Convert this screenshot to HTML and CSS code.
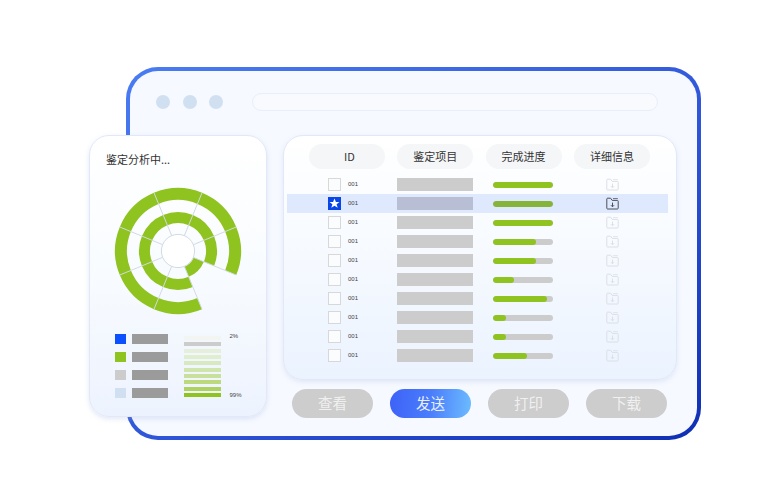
FILE: index.html
```html
<!DOCTYPE html>
<html lang="zh">
<head>
<meta charset="utf-8">
<title>鉴定分析</title>
<link rel="stylesheet" href="styles.css">
</head>
<body>
<svg class="defs" width="0" height="0" aria-hidden="true">
  <symbol id="folder" viewBox="0 0 13 13">
    <path d="M.8 11.2V2C.8 1.5 1.1 1.2 1.6 1.2H4.6L6.2 3.4H11.4C11.9 3.4 12.2 3.7 12.2 4.2V11.2C12.2 11.7 11.9 12 11.4 12H1.6C1.1 12 .8 11.7 .8 11.2Z" fill="none" stroke="currentColor" stroke-width="1"/>
    <path d="M7 1.6H11.8" fill="none" stroke="currentColor" stroke-width=".8"/>
    <path d="M6.5 5.6V9.6M4.9 8.2L6.5 9.8L8.1 8.2" fill="none" stroke="currentColor" stroke-width="1"/>
  </symbol>
</svg>
<div class="window">
  <div class="topbar">
    <span class="dot"></span><span class="dot"></span><span class="dot"></span>
    <div class="address"></div>
  </div>
  <div class="main">
    <div class="table-card">
      <div class="grid head">
        <div class="pill pill-id">ID</div>
        <div class="pill">鉴定项目</div>
        <div class="pill">完成进度</div>
        <div class="pill">详细信息</div>
      </div>
      <div class="grid row">
        <div class="id"><span class="check"></span><span class="num">001</span></div>
        <div class="block"></div>
        <div class="track"><div class="fill" style="width:100%"></div></div>
        <svg class="file"><use href="#folder"/></svg>
      </div>
      <div class="grid row active">
        <div class="id"><span class="check on"><svg viewBox="0 0 13 13"><path d="M6.5 1.6L7.9 5H11.5L8.6 7.2L9.7 10.8L6.5 8.7L3.3 10.8L4.4 7.2L1.5 5H5.1Z" fill="#fff"/></svg></span><span class="num">001</span></div>
        <div class="block"></div>
        <div class="track"><div class="fill" style="width:100%"></div></div>
        <svg class="file"><use href="#folder"/></svg>
      </div>
      <div class="grid row">
        <div class="id"><span class="check"></span><span class="num">001</span></div>
        <div class="block"></div>
        <div class="track"><div class="fill" style="width:100%"></div></div>
        <svg class="file"><use href="#folder"/></svg>
      </div>
      <div class="grid row">
        <div class="id"><span class="check"></span><span class="num">001</span></div>
        <div class="block"></div>
        <div class="track"><div class="fill" style="width:72%"></div></div>
        <svg class="file"><use href="#folder"/></svg>
      </div>
      <div class="grid row">
        <div class="id"><span class="check"></span><span class="num">001</span></div>
        <div class="block"></div>
        <div class="track"><div class="fill" style="width:72%"></div></div>
        <svg class="file"><use href="#folder"/></svg>
      </div>
      <div class="grid row">
        <div class="id"><span class="check"></span><span class="num">001</span></div>
        <div class="block"></div>
        <div class="track"><div class="fill" style="width:35%"></div></div>
        <svg class="file"><use href="#folder"/></svg>
      </div>
      <div class="grid row">
        <div class="id"><span class="check"></span><span class="num">001</span></div>
        <div class="block"></div>
        <div class="track"><div class="fill" style="width:90%"></div></div>
        <svg class="file"><use href="#folder"/></svg>
      </div>
      <div class="grid row">
        <div class="id"><span class="check"></span><span class="num">001</span></div>
        <div class="block"></div>
        <div class="track"><div class="fill" style="width:22%"></div></div>
        <svg class="file"><use href="#folder"/></svg>
      </div>
      <div class="grid row">
        <div class="id"><span class="check"></span><span class="num">001</span></div>
        <div class="block"></div>
        <div class="track"><div class="fill" style="width:22%"></div></div>
        <svg class="file"><use href="#folder"/></svg>
      </div>
      <div class="grid row">
        <div class="id"><span class="check"></span><span class="num">001</span></div>
        <div class="block"></div>
        <div class="track"><div class="fill" style="width:57%"></div></div>
        <svg class="file"><use href="#folder"/></svg>
      </div>
    </div>
    <div class="actions">
      <div class="btn">查看</div>
      <div class="btn primary">发送</div>
      <div class="btn">打印</div>
      <div class="btn">下载</div>
    </div>
  </div>
  <div class="side-card">
    <div class="side-title">鉴定分析中...</div>
    <svg class="donut" viewBox="0 0 130 130">
      <g fill="none" stroke="#8fc31f">
        <circle cx="65" cy="65" r="57" stroke-width="12" pathLength="360" stroke-dasharray="315 45" transform="rotate(67.5 65 65)"/>
        <circle cx="65" cy="65" r="33.5" stroke-width="11" pathLength="360" stroke-dasharray="315 45" transform="rotate(67.5 65 65)"/>
        <circle cx="65" cy="65" r="22.5" stroke-width="11" pathLength="360" stroke-dasharray="45 315" transform="rotate(22.5 65 65)"/>
      </g>
      <g stroke="#d2dae3" stroke-width="1">
        <path d="M65 65L123.2 41"/>
        <path d="M65 65L123.2 89"/>
        <path d="M65 65L89 123.2"/>
        <path d="M65 65L41 123.2"/>
        <path d="M65 65L6.8 89"/>
        <path d="M65 65L6.8 41"/>
        <path d="M65 65L41 6.8"/>
        <path d="M65 65L89 6.8"/>
      </g>
      <circle cx="65" cy="65" r="16.6" fill="#fff" stroke="#d2dae3" stroke-width="1"/>
    </svg>
    <div class="legend-area">
      <div class="legend">
        <div class="legend-row"><span class="swatch blue"></span><span class="legend-bar"></span></div>
        <div class="legend-row"><span class="swatch green"></span><span class="legend-bar"></span></div>
        <div class="legend-row"><span class="swatch grey"></span><span class="legend-bar"></span></div>
        <div class="legend-row"><span class="swatch pale"></span><span class="legend-bar"></span></div>
      </div>
      <div class="scale">
        <span class="tick t0"></span><span class="tick t1"></span><span class="tick t2"></span><span class="tick t3"></span><span class="tick t4"></span>
        <span class="tick t5"></span><span class="tick t6"></span><span class="tick t7"></span><span class="tick t8"></span><span class="tick t9"></span>
      </div>
      <div class="scale-labels"><span>2%</span><span>99%</span></div>
    </div>
  </div>
</div>
</body>
</html>
```
FILE: styles.css
```css
* { box-sizing: border-box; }
html, body { margin: 0; padding: 0; background: #fff; }
body {
  width: 767px;
  height: 500px;
  overflow: hidden;
  font-family: "Noto Sans CJK SC", "Noto Sans", sans-serif;
  color: #333;
}
.defs { display: block; height: 0; }
.window {
  position: relative;
  width: 575px;
  height: 373px;
  margin: 67px 0 0 126px;
  padding: 4px;
  border-radius: 32px;
  background: linear-gradient(150deg, #4a7cf2 0%, #2f55d8 55%, #0f2fb4 100%);
}
.window::before {
  content: "";
  position: absolute;
  inset: 4px;
  border-radius: 28px;
  background: #f6f9ff;
}
.topbar, .main { position: relative; }
.topbar {
  display: flex;
  align-items: center;
  gap: 12.5px;
  height: 64px;
  padding: 0 0 3px 26px;
}
.dot {
  width: 14px;
  height: 14px;
  border-radius: 50%;
  background: #d0e0f0;
}
.address {
  width: 406px;
  height: 18px;
  margin-left: 16px;
  border: 1px solid #e9eef8;
  border-radius: 9px;
  background: #f8fafe;
}
.main {
  display: flex;
  flex-direction: column;
  width: 394px;
  margin-left: 153px;
}
.table-card {
  height: 245px;
  padding: 8px 0 0 3px;
  border: 1px solid #e2e8f8;
  border-radius: 20px;
  background: linear-gradient(180deg, #fff 0%, #f8fbff 40%, #ebf3ff 100%);
  box-shadow: 0 2px 5px rgba(160, 180, 225, .25);
}
.grid {
  display: grid;
  grid-template-columns: 76px 76px 76px 76px;
  column-gap: 12.3px;
  align-items: center;
  width: 381px;
  padding-left: 22px;
}
.head { height: 25px; margin-bottom: 6px; }
.pill {
  height: 25px;
  border-radius: 13px;
  background: #f5f6f8;
  font-size: 11px;
  line-height: 24px;
  text-align: center;
  color: #333;
}
.pill-id { padding-left: 5px; }
.row { height: 19px; }
.row.active { background: #dfe9fd; }
.id {
  display: flex;
  align-items: center;
  gap: 7px;
  padding-left: 19px;
  font-family: "Liberation Sans", sans-serif;
  font-size: 6px;
  color: #444;
}
.num { margin-top: -2px; }
.check {
  display: block;
  width: 13px;
  height: 13px;
  border: 1px solid #d8d8d8;
  background: #fbfcfe;
}
.check.on { border-color: #0a45e8; background: #0a45e8; }
.check.on svg { display: block; width: 13px; height: 13px; margin: -1px; }
.block {
  width: 76px;
  height: 13px;
  background: #cccccc;
}
.active .block { background: #b8bfd4; }
.track {
  width: 60.6px;
  height: 6px;
  margin-left: 7px;
  border-radius: 3px;
  background: #cccccc;
  overflow: hidden;
}
.fill {
  height: 6px;
  border-radius: 3px;
  background: #8fc31f;
}
.active .fill { background: #86b43a; }
.file {
  display: block;
  justify-self: center;
  width: 13px;
  height: 13px;
  margin-left: 2px;
  color: #dcdfe4;
}
.active .file { color: #4a4f5a; }
.actions {
  display: flex;
  gap: 17px;
  margin: 9px 0 0 9px;
}
.btn {
  width: 81px;
  height: 29px;
  border-radius: 15px;
  background: #cdcdcd;
  font-size: 14.5px;
  line-height: 28px;
  text-align: center;
  color: rgba(255, 255, 255, .72);
}
.btn.primary {
  background: linear-gradient(95deg, #3d62f8 0%, #4a7dfb 50%, #6cbcff 100%);
  color: rgba(255, 255, 255, .9);
}
.side-card {
  position: absolute;
  left: -37px;
  top: 68px;
  display: flex;
  flex-direction: column;
  width: 178px;
  height: 282px;
  padding: 8px 16px 0 16px;
  border: 1px solid #e2e8f8;
  border-radius: 20px;
  background: linear-gradient(180deg, #fff 0%, #f9fcff 45%, #edf3fe 100%);
  box-shadow: 0 2px 5px rgba(160, 180, 225, .3);
}
.side-title {
  height: 31px;
  font-size: 11px;
  line-height: 31px;
  color: #333;
}
.donut {
  display: block;
  width: 130px;
  height: 130px;
  margin: 11px 0 0 7px;
}
.legend-area {
  position: relative;
  display: flex;
  margin: 18px 0 0 9px;
}
.legend {
  display: flex;
  flex-direction: column;
  gap: 8px;
  width: 69px;
}
.legend-row { display: flex; gap: 6px; height: 10px; }
.swatch { width: 11px; height: 10px; }
.swatch.blue { background: #0a50ff; }
.swatch.green { background: #8fc31f; }
.swatch.grey { background: #cccccc; }
.swatch.pale { background: #d0e0f0; }
.legend-bar { width: 36px; height: 10px; background: #9b9b9b; }
.scale {
  display: flex;
  flex-direction: column;
  gap: 2.35px;
  width: 36.5px;
  margin-top: 2px;
}
.tick { display: block; height: 4px; }
.t0 { background: #f3f5f3; }
.t1 { background: #cccccc; }
.t2 { background: #e6efdb; }
.t3 { background: #e1edcf; }
.t4 { background: #d8e8c0; }
.t5 { background: #d0e4ae; }
.t6 { background: #c8e09c; }
.t7 { background: #bcd97e; }
.t8 { background: #aed25e; }
.t9 { background: #8fc31f; }
.scale-labels {
  display: flex;
  flex-direction: column;
  justify-content: space-between;
  height: 66px;
  margin: -1px 0 0 9px;
  font-family: "Liberation Sans", sans-serif;
  font-size: 6px;
  line-height: 7px;
  color: #444;
}
```
